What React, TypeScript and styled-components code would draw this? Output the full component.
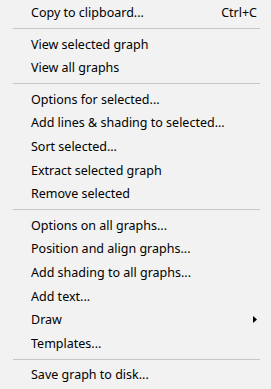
import React from "react";
import styled, { createGlobalStyle } from "styled-components";

const GlobalStyle = createGlobalStyle`
    html, body {
        margin: 0;
        padding: 0;
        background: #f2f2f2;
    }
`;

const Menu = styled.div`
    width: 271px;
    height: 389px;
    box-sizing: border-box;
    padding-top: 1px;
    background: #f2f2f2;
    font-family: "Noto Sans", "Open Sans", sans-serif;
    font-size: 12.5px;
    color: #000;
    overflow: hidden;
`;

const Row = styled.div`
    display: flex;
    align-items: center;
    height: 23.6px;
    line-height: 23.6px;
    padding: 0 14px 0 31px;
    white-space: nowrap;
`;

const Label = styled.span`
    flex: 1;
`;

const Shortcut = styled.span`
    margin-left: 16px;
`;

const Separator = styled.div`
    height: 1px;
    margin: 3.5px 11px 3.5px 13px;
    background: #c6c6c6;
`;

const Arrow = () => (
    <svg width="4" height="7" viewBox="0 0 4 7">
        <polygon points="0,0 4,3.5 0,7" fill="#000" />
    </svg>
);

type Item = { label: string; shortcut?: string; submenu?: boolean } | "sep";

const items: Item[] = [
    { label: "Copy to clipboard...", shortcut: "Ctrl+C" },
    "sep",
    { label: "View selected graph" },
    { label: "View all graphs" },
    "sep",
    { label: "Options for selected..." },
    { label: "Add lines & shading to selected..." },
    { label: "Sort selected..." },
    { label: "Extract selected graph" },
    { label: "Remove selected" },
    "sep",
    { label: "Options on all graphs..." },
    { label: "Position and align graphs..." },
    { label: "Add shading to all graphs..." },
    { label: "Add text..." },
    { label: "Draw", submenu: true },
    { label: "Templates..." },
    "sep",
    { label: "Save graph to disk..." },
];

export default function App() {
    return (
        <>
            <GlobalStyle />
            <Menu>
                {items.map((item, i) =>
                    item === "sep" ? (
                        <Separator key={i} />
                    ) : (
                        <Row key={i}>
                            <Label>{item.label}</Label>
                            {item.shortcut && <Shortcut>{item.shortcut}</Shortcut>}
                            {item.submenu && <Arrow />}
                        </Row>
                    )
                )}
            </Menu>
        </>
    );
}
